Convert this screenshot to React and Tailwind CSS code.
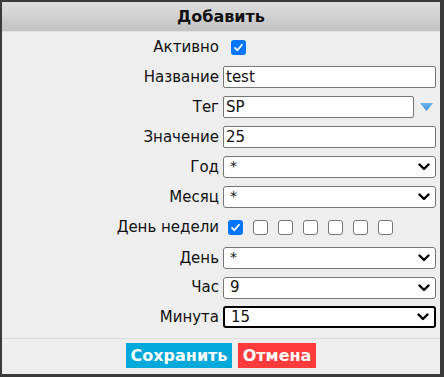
import { useState } from 'react'

const days = [true, false, false, false, false, false, false]

function Check({ checked }) {
  if (checked) {
    return (
      <span className="flex h-[15px] w-[15px] shrink-0 items-center justify-center rounded-[3px] bg-[#0075ff]">
        <svg width="11" height="11" viewBox="0 0 12 12">
          <path d="M2.2 6.4 L4.8 9 L9.8 3" fill="none" stroke="#fff" strokeWidth="2" strokeLinecap="round" strokeLinejoin="round" />
        </svg>
      </span>
    )
  }
  return <span className="h-[15px] w-[15px] shrink-0 rounded-[3px] border border-[#767676] bg-white" />
}

function Row({ label, h = 'h-[30px]', children }) {
  return (
    <div className={`flex items-center ${h}`}>
      <div className="w-[218px] pr-[1px] text-right">{label}</div>
      <div className="ml-[3px] flex w-[213px] items-center">{children}</div>
    </div>
  )
}

function Select({ value, focused }) {
  return (
    <div
      className={`relative flex h-[22px] w-full items-center rounded-[3px] bg-white pl-[6px] ${
        focused ? 'border-2 border-black pl-[5px]' : 'border border-[#767676]'
      }`}
    >
      <span className={value === '*' ? 'self-start pt-[2px] text-[14px] leading-none' : ''}>{value}</span>
      <svg className="absolute right-[5px] top-1/2 -translate-y-1/2" width="12" height="8" viewBox="0 0 12 8">
        <path d="M1.5 1.5 L6 6 L10.5 1.5" fill="none" stroke="#000" strokeWidth="2.4" strokeLinecap="round" strokeLinejoin="round" />
      </svg>
    </div>
  )
}

function TextInput({ value, className = 'w-full' }) {
  return (
    <div className={`flex h-[22px] items-center rounded-[2px] border border-[#767676] bg-white pl-[2px] ${className}`}>
      {value}
    </div>
  )
}

export default function App() {
  const [active] = useState(true)

  return (
    <div className="h-[377px] w-[444px] bg-[#3a3a3a] pl-[2px] pt-[2px] text-[15px] text-[#111] [font-family:'DejaVu_Sans',Verdana,sans-serif]">
      <div className="flex h-[372px] w-[438px] flex-col bg-[#eeeeee]">
        <div className="flex h-[30px] items-center justify-center border-b border-[#e2e2e2] bg-gradient-to-b from-[#dedede] to-[#c3c3c3] text-[16px] font-bold">
          Добавить
        </div>

        <div className="flex flex-col">
          <Row label="Активно">
            <span className="ml-[8px]">
              <Check checked={active} />
            </span>
          </Row>
          <Row label="Название">
            <TextInput value="test" />
          </Row>
          <Row label="Тег">
            <TextInput value="SP" className="w-[191px]" />
            <svg className="ml-[6px]" width="13" height="8" viewBox="0 0 13 8">
              <defs>
                <linearGradient id="tg" x1="0" y1="0" x2="0" y2="1">
                  <stop offset="0" stopColor="#6bb5ee" />
                  <stop offset="1" stopColor="#3d8fd6" />
                </linearGradient>
              </defs>
              <path d="M0 0 H13 L6.5 8 Z" fill="url(#tg)" />
            </svg>
          </Row>
          <Row label="Значение">
            <TextInput value="25" />
          </Row>
          <Row label="Год">
            <Select value="*" />
          </Row>
          <Row label="Месяц">
            <Select value="*" />
          </Row>
          <Row label="День недели" h="h-[31px]">
            <div className="ml-[5px] flex gap-[10px]">
              {days.map((d, i) => (
                <Check key={i} checked={d} />
              ))}
            </div>
          </Row>
          <Row label="День">
            <Select value="*" />
          </Row>
          <Row label="Час" h="h-[29px]">
            <Select value="9" />
          </Row>
          <Row label="Минута">
            <Select value="15" focused />
          </Row>
        </div>

        <div className="mt-[6px] flex justify-center gap-[6px] border-t border-[#dcdcdc] pt-[4px] text-[16px] font-bold text-white">
          <button className="flex h-[25px] w-[106px] items-center justify-center bg-[#00a9d9]">Сохранить</button>
          <button className="flex h-[25px] w-[78px] items-center justify-center bg-[#ff3b3b]">Отмена</button>
        </div>
      </div>
    </div>
  )
}
